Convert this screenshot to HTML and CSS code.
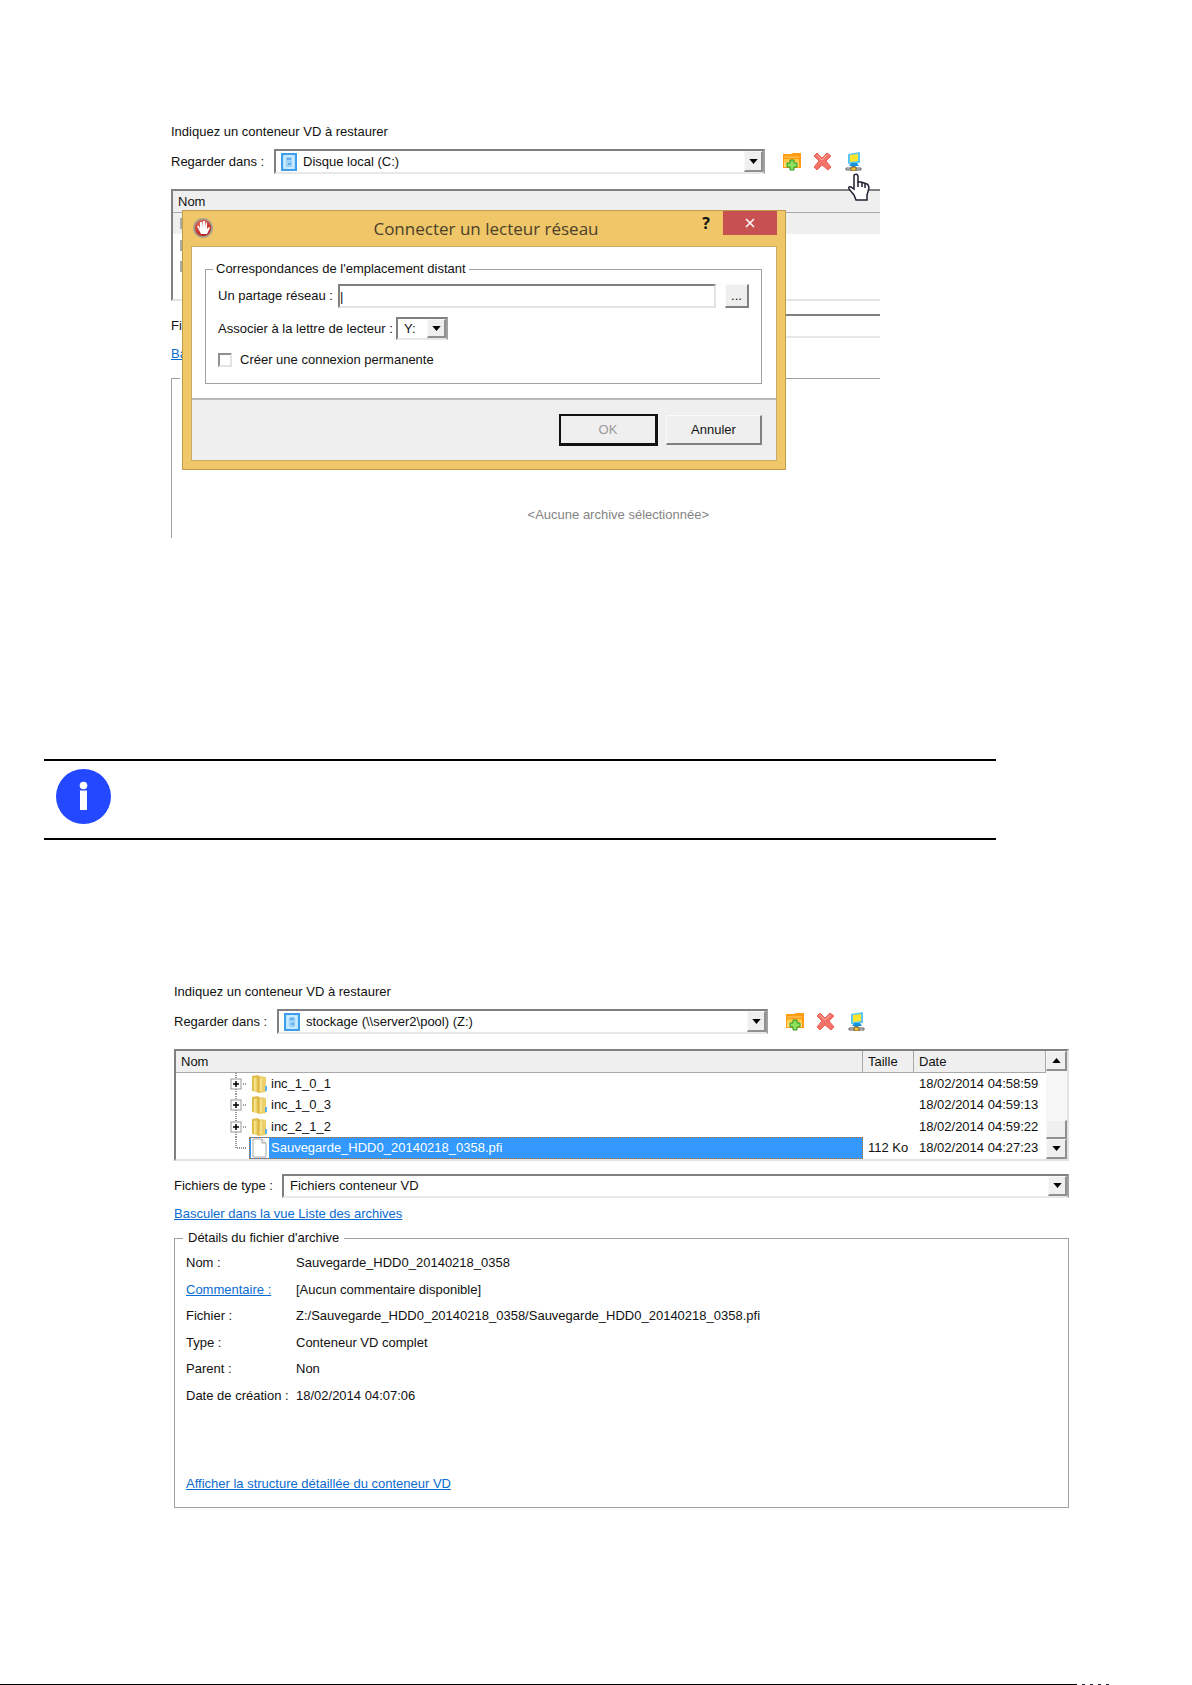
FILE: index.html
```
<!DOCTYPE html>
<html lang="fr">
<head>
<meta charset="utf-8">
<title>Restaurer un conteneur VD</title>
<link rel="stylesheet" href="styles.css">
</head>
<body>
<svg class="defs" aria-hidden="true">
  <defs>
    <linearGradient id="gold" x1="0" y1="0" x2="0" y2="1"><stop offset="0" stop-color="#ffc23a"/><stop offset="1" stop-color="#ffe98a"/></linearGradient>
    <linearGradient id="folderGold"><stop offset="0" stop-color="#fff0a0"/><stop offset="1" stop-color="#d9ad35"/></linearGradient>
    <radialGradient id="ball" cx="0.4" cy="0.3" r="0.8"><stop offset="0" stop-color="#f0705c"/><stop offset="1" stop-color="#a80c0c"/></radialGradient>
    <symbol id="disk" viewBox="0 0 16 18">
      <rect x="1" y="1" width="14" height="16" fill="#b5e2ff" stroke="#3d9fec" stroke-width="2"/>
      <rect x="4" y="3" width="8" height="12" rx="2" fill="#9ad4fb" stroke="#e6f6ff"/>
      <path d="M6 6h4" stroke="#2f86d8"/><path d="M7 11h3" stroke="#2f86d8"/>
    </symbol>
    <symbol id="newfolder" viewBox="0 0 19 19">
      <path d="M1 2h8l2-1h8v15H1z" fill="#ff9c12"/><path d="M2 7h15v8H2z" fill="url(#gold)"/><path d="M2 5h15" stroke="#ffd070"/>
      <path d="M8 8h4v3h3v4h-3v3H8v-3H5v-4h3z" fill="#8fe05c" stroke="#2f9a24"/>
    </symbol>
    <symbol id="cross" viewBox="0 0 19 19">
      <path d="M4 1l5 5 5-5 4 3-5 5 5 6-3 3-6-5-5 5-3-3 5-6-5-5z" fill="#f47368" stroke="#ea6257"/>
      <path d="M4 3l5 5 5-5" fill="none" stroke="#ffaea2"/>
    </symbol>
    <symbol id="netdrive" viewBox="0 0 17 19">
      <path d="M3 2l12-2v11l-12 1z" fill="#5cc6f4"/><path d="M5 3l8-1v7l-8 1z" fill="#ffe62e"/>
      <path d="M6 11l6 0 2 3h-4v3H7v-3H4z" fill="#1792dc"/>
      <path d="M1 16h15v2H1z" fill="#d8d8d8" stroke="#666"/><path d="M6 15h5v4H6z" fill="#f2bd32" stroke="#7a6230"/>
    </symbol>
    <symbol id="folder" viewBox="0 0 18 20">
      <path d="M1 2l6-1 2 2v15l-8-1z" fill="#e0bc4a"/><path d="M3 4l5-1v16l-5-2z" fill="url(#folderGold)"/>
      <path d="M9 2l6 1v15l-7 1z" fill="#ecd069"/><path d="M10 4v13" stroke="#fff3b0"/><path d="M15 12v5" stroke="#58b4e8" stroke-width="2"/>
    </symbol>
    <symbol id="page" viewBox="0 0 18 20">
      <path d="M0 0h18v20H0z" fill="#fff"/><path d="M2 1h9l4 4v14H2z" fill="#fff" stroke="#a8a8a8"/><path d="M11 1v4h4" fill="#eee" stroke="#a8a8a8"/>
    </symbol>
    <symbol id="down" viewBox="0 0 10 6"><path d="M0 0h10L5 6z"/></symbol>
    <symbol id="up" viewBox="0 0 10 6"><path d="M0 6h10L5 0z"/></symbol>
    <symbol id="node" viewBox="0 0 20 22">
      <path d="M7 0v5M7 16v6M14 11h4" fill="none" stroke="#333" stroke-dasharray="1 1"/>
      <rect x="2" y="6" width="10" height="10" fill="#fff" stroke="#999"/><path d="M4 11h6M7 8v6" stroke="#000" stroke-width="1.500"/>
    </symbol>
    <symbol id="leaf" viewBox="0 0 20 22"><path d="M7 0v11h11" fill="none" stroke="#333" stroke-dasharray="1 1"/></symbol>
  </defs>
</svg>

<main>
  <section class="shot shot-small">
    <p class="caption">Indiquez un conteneur VD à restaurer</p>
    <div class="row row-look">
      <label for="look1">Regarder dans :</label>
      <div class="combo combo-disk">
        <svg class="disk"><use href="#disk"/></svg>
        <select id="look1"><option>Disque local (C:)</option></select>
        <span class="arrow"><svg><use href="#down"/></svg></span>
      </div>
      <div class="tools">
        <button type="button" aria-label="Nouveau dossier"><svg><use href="#newfolder"/></svg></button>
        <button type="button" aria-label="Supprimer"><svg><use href="#cross"/></svg></button>
        <button type="button" aria-label="Connecter un lecteur réseau"><svg><use href="#netdrive"/></svg></button>
      </div>
    </div>
    <div class="list">
      <table>
        <thead><tr><th>Nom</th></tr></thead>
        <tbody>
          <tr class="shade"><td><span class="tick"></span></td></tr>
          <tr><td><span class="tick"></span></td></tr>
          <tr><td><span class="tick"></span></td></tr>
          <tr><td></td></tr>
        </tbody>
      </table>
    </div>
    <div class="row row-type">
      <label for="type1">Fi</label>
      <div class="combo"><select id="type1"><option></option></select></div>
    </div>
    <p class="switch"><a href="#archives">Ba</a></p>
    <fieldset class="details">
      <legend>Détails</legend>
      <p class="empty">&lt;Aucune archive sélectionnée&gt;</p>
    </fieldset>

    <svg class="hand" viewBox="0 0 24 28" aria-hidden="true">
      <path d="M7 2q3-2 4 1v6l3 0 3 1 3 1q2 1 2 4l-2 7v5H9l-2-5-5-6q-1-3 2-2l3 2z" fill="#fff" stroke="#222233" stroke-width="1.500"/>
      <path d="M11 8v6M15 9v5M18 11v4" stroke="#222233" stroke-width="1.500"/>
    </svg>

    <div class="dialog" role="dialog" aria-labelledby="dlg-title">
      <header class="titlebar">
        <svg class="app" viewBox="0 0 20 20"><circle cx="10" cy="10" r="9" fill="url(#ball)" stroke="#a79a8c" stroke-width="2"/><path d="M4 8l2 0 1 3V4h2v5l1-6h2v6l1-5 1 1v6l2-2 1 1-3 6H8z" fill="#fff"/></svg>
        <h2 id="dlg-title">Connecter un lecteur réseau</h2>
        <button type="button" class="help">?</button>
        <button type="button" class="close" aria-label="Fermer"><svg viewBox="0 0 10 10"><path d="M1 1l8 8M9 1l-8 8" stroke="#fff" stroke-width="1.500"/></svg></button>
      </header>
      <form class="sheet">
        <fieldset class="mapping">
          <legend>Correspondances de l'emplacement distant</legend>
          <div class="field field-share">
            <label for="share">Un partage réseau :</label>
            <input id="share" type="text" value="|">
            <button type="button" class="push browse">...</button>
          </div>
          <div class="field field-letter">
            <label for="letter">Associer à la lettre de lecteur :</label>
            <div class="combo">
              <select id="letter"><option>Y:</option></select>
              <span class="arrow"><svg><use href="#down"/></svg></span>
            </div>
          </div>
          <div class="field field-keep">
            <input id="keep" type="checkbox"><label for="keep">Créer une connexion permanente</label>
          </div>
        </fieldset>
        <div class="actions">
          <button type="button" class="push ok" disabled>OK</button>
          <button type="button" class="push">Annuler</button>
        </div>
      </form>
    </div>
  </section>

  <aside class="note">
    <svg viewBox="0 0 55 55" role="img" aria-label="Information"><circle cx="27.500" cy="27.500" r="27.500" fill="#2448ff"/><circle cx="27.500" cy="16.500" r="3.800" fill="#fff"/><path d="M24 21.500h7V41h-7z" fill="#fff"/></svg>
  </aside>

  <section class="shot shot-large" id="archives">
    <p class="caption">Indiquez un conteneur VD à restaurer</p>
    <div class="row row-look">
      <label for="look2">Regarder dans :</label>
      <div class="combo combo-disk">
        <svg class="disk"><use href="#disk"/></svg>
        <select id="look2"><option>stockage (\\server2\pool) (Z:)</option></select>
        <span class="arrow"><svg><use href="#down"/></svg></span>
      </div>
      <div class="tools">
        <button type="button" aria-label="Nouveau dossier"><svg><use href="#newfolder"/></svg></button>
        <button type="button" aria-label="Supprimer"><svg><use href="#cross"/></svg></button>
        <button type="button" aria-label="Connecter un lecteur réseau"><svg><use href="#netdrive"/></svg></button>
      </div>
    </div>
    <div class="list">
      <table>
        <thead><tr><th>Nom</th><th class="size">Taille</th><th class="date">Date</th></tr></thead>
        <tbody>
          <tr><td><div class="tree"><svg class="branch"><use href="#node"/></svg><span class="file"><svg><use href="#folder"/></svg>inc_1_0_1</span></div></td><td></td><td>18/02/2014 04:58:59</td></tr>
          <tr><td><div class="tree"><svg class="branch"><use href="#node"/></svg><span class="file"><svg><use href="#folder"/></svg>inc_1_0_3</span></div></td><td></td><td>18/02/2014 04:59:13</td></tr>
          <tr><td><div class="tree"><svg class="branch"><use href="#node"/></svg><span class="file"><svg><use href="#folder"/></svg>inc_2_1_2</span></div></td><td></td><td>18/02/2014 04:59:22</td></tr>
          <tr><td><div class="tree"><svg class="branch"><use href="#leaf"/></svg><span class="file selected"><svg><use href="#page"/></svg>Sauvegarde_HDD0_20140218_0358.pfi</span></div></td><td>112 Ko</td><td>18/02/2014 04:27:23</td></tr>
        </tbody>
      </table>
      <div class="scroll">
        <span class="arrow"><svg><use href="#up"/></svg></span>
        <span class="arrow thumb"></span>
        <span class="arrow"><svg><use href="#down"/></svg></span>
      </div>
    </div>
    <div class="row row-type">
      <label for="type2">Fichiers de type :</label>
      <div class="combo"><select id="type2"><option>Fichiers conteneur VD</option></select><span class="arrow"><svg><use href="#down"/></svg></span></div>
    </div>
    <p class="switch"><a href="#archives">Basculer dans la vue Liste des archives</a></p>
    <fieldset class="details">
      <legend>Détails du fichier d'archive</legend>
      <dl>
        <dt>Nom :</dt><dd>Sauvegarde_HDD0_20140218_0358</dd>
        <dt><a href="#commentaire">Commentaire :</a></dt><dd>[Aucun commentaire disponible]</dd>
        <dt>Fichier :</dt><dd>Z:/Sauvegarde_HDD0_20140218_0358/Sauvegarde_HDD0_20140218_0358.pfi</dd>
        <dt>Type :</dt><dd>Conteneur VD complet</dd>
        <dt>Parent :</dt><dd>Non</dd>
        <dt>Date de création :</dt><dd>18/02/2014 04:07:06</dd>
      </dl>
      <p class="structure"><a href="#structure">Afficher la structure détaillée du conteneur VD</a></p>
    </fieldset>
  </section>
</main>
<footer><span class="rule"></span><span class="marks"></span></footer>
</body>
</html>
```
FILE: styles.css
```
* { box-sizing: border-box; }

body {
  margin: 0;
  background: #fff;
  color: #111;
  font: 13px/16px "Liberation Sans", Arial, sans-serif;
}

p, h2, dl, dd { margin: 0; }
button, select, input { font: inherit; color: inherit; margin: 0; }
svg { display: block; }
a { color: #0a6cd0; }
.defs { position: absolute; width: 0; height: 0; }

/* Explorer panels */
.shot-small { position: relative; margin: 124px 312px 0 171px; }
.shot-large { margin: 144px 123px 0 174px; }

.row { display: flex; align-items: center; }
.row-look { margin-top: 9px; height: 25px; }
.row-look label { width: 103px; }
.row-type { margin-top: 13px; height: 24px; }
.row-type label { width: 108px; }
.row-type .combo { flex: 1; }

.combo {
  display: flex;
  align-items: center;
  height: 100%;
  border: 2px solid #808080;
  border-right-color: #a0a0a0;
  border-bottom: 2px solid #e8e8e8;
  background: #fff;
}
.combo-disk { width: 491px; padding-left: 5px; }
.combo select {
  appearance: none;
  flex: 1;
  min-width: 0;
  padding: 0 0 0 6px;
  border: 0;
  background: none;
}
.disk { width: 16px; height: 18px; }

.arrow {
  display: flex;
  align-items: center;
  justify-content: center;
  width: 19px;
  height: 100%;
  background: #efefef;
  border: 1px solid #f8f8f8;
  border-right: 2px solid #909090;
  border-bottom: 2px solid #909090;
}
.arrow svg { width: 9px; height: 5px; }

.tools { display: flex; gap: 12px; margin-left: 17px; }
.tools button { padding: 0; border: 0; background: none; }
.tools svg { width: 19px; height: 19px; }

.list {
  display: flex;
  margin-top: 15px;
  height: 112px;
  border: 2px solid #808080;
  border-right-color: #e3e3e3;
  border-bottom-color: #e3e3e3;
}
table { flex: 1; height: 108px; border-collapse: separate; border-spacing: 0; table-layout: fixed; }
th {
  height: 22px;
  padding: 0 5px;
  background: #efefef;
  border-right: 1px solid #a8a8a8;
  border-bottom: 1px solid #a8a8a8;
  text-align: left;
  font-weight: normal;
}
td { height: 21px; padding: 0 0 0 5px; white-space: nowrap; }
td:first-child { padding-left: 0; }
tr:nth-child(even) td, tr:nth-child(even) .tree { height: 22px; }
.size { width: 51px; }
.date { width: 132px; }

.tree { display: flex; height: 21px; padding-left: 53px; overflow: hidden; }
.branch { width: 20px; height: 22px; flex: none; }
.file { display: flex; flex: 1; align-items: center; gap: 2px; padding-left: 2px; }
.file svg { width: 18px; height: 20px; }
.selected { background: #3399ff; color: #fff; outline: 1px dotted #c46a1c; outline-offset: -1px; }

.scroll {
  display: flex;
  flex-direction: column;
  width: 21px;
  background: #f6f6f6;
}
.scroll .arrow { width: 21px; height: 20px; }
.scroll .thumb { margin-top: auto; height: 19px; }

.switch { margin-top: 8px; }

fieldset { margin: 0; min-width: 0; border: 1px solid #a0a0a0; }
legend { padding: 0 5px; }
.details { margin-top: 8px; padding: 0 11px; }
.details legend { margin-left: -3px; }

.shot-small .list { border-right: 0; }
.shot-small th { border-right: 0; }
.shot-small .row-type .combo { border-right: 0; }
.shot-small .details { height: 168px; border-right: 0; border-bottom: 0; }
.shade td { background: #efefef; }
.tick { display: block; width: 12px; height: 11px; margin-left: 7px; border: 2px solid #aaa; }
.empty { padding-top: 121px; text-align: right; margin-right: 160px; color: #848484; }

.shot-large .details { height: 278px; }
.details dl {
  display: grid;
  grid-template-columns: 110px 1fr;
  grid-auto-rows: 1fr;
  align-items: center;
  height: 159px;
  margin-top: 4px;
}
.structure { margin-top: 67px; }

.hand { position: absolute; left: 676px; top: 49px; width: 24px; height: 28px; }

/* Network drive dialog */
.dialog {
  position: absolute;
  left: 11px;
  right: 94px;
  top: 86px;
  padding: 0 8px 8px;
  background: #efc668;
  border: 1px solid #c09c48;
}
.titlebar { display: flex; height: 35px; align-items: flex-start; }
.app { width: 20px; height: 20px; margin: 7px 0 0 2px; }
.titlebar h2 {
  flex: 1;
  padding: 6px 0 0 70px;
  text-align: center;
  color: #4a402a;
  font: 17px/24px "Open Sans", "Noto Sans", sans-serif;
}
.titlebar button { border: 0; padding: 0; height: 24px; }
.help { width: 34px; background: none; font: bold 16px/24px "Open Sans", sans-serif; }
.close { display: grid; place-items: center; width: 54px; background: #c75050; }
.close svg { width: 10px; height: 10px; }

.sheet { background: #fff; border: 1px solid #c8ab68; }
.mapping { margin: 14px 14px 14px 13px; padding: 0 12px 15px; }
.mapping legend { margin-left: -5px; padding: 0 3px; }
.field { display: flex; align-items: center; }
.field-share { margin-top: 7px; height: 24px; }
.field-share label { width: 120px; }
.field-share input {
  flex: 1;
  min-width: 0;
  height: 24px;
  padding: 0;
  border: 2px solid #808080;
  border-right-color: #e3e3e3;
  border-bottom-color: #e3e3e3;
}
.push {
  background: #efefef;
  border: 1px solid #fafafa;
  border-right: 2px solid #808080;
  border-bottom: 2px solid #808080;
  padding: 0;
  width: 96px;
  height: 30px;
}
.push.browse { width: 24px; height: 24px; margin-left: 9px; }
.field-letter { margin-top: 9px; height: 23px; }
.field-letter label { width: 178px; }
.field-letter .combo { width: 52px; }
.field-keep { margin-top: 12px; height: 16px; gap: 8px; }
.field-keep input {
  appearance: none;
  width: 14px;
  height: 14px;
  border: 2px solid #909090;
  border-right-color: #e3e3e3;
  border-bottom-color: #e3e3e3;
}
.actions {
  display: flex;
  align-items: center;
  justify-content: flex-end;
  gap: 8px;
  height: 62px;
  padding-right: 14px;
  background: #efefef;
  border-top: 2px solid #b8b8b8;
}
.push.ok { width: 99px; height: 32px; border: 2px solid #111; border-right-width: 3px; border-bottom-width: 3px; color: #999; }

/* Information note */
.note {
  margin: 221px 196px 0 44px;
  padding: 8px 12px 14px;
  border: solid #000;
  border-width: 2px 0;
}
.note svg { width: 55px; height: 55px; }

footer { display: flex; height: 1px; margin-top: 176px; }
.rule { flex: 1; background: #000; }
.marks { width: 37px; margin-right: 78px; background: repeating-linear-gradient(90deg, #fff 0 5px, #223 5px 8px); }
```
